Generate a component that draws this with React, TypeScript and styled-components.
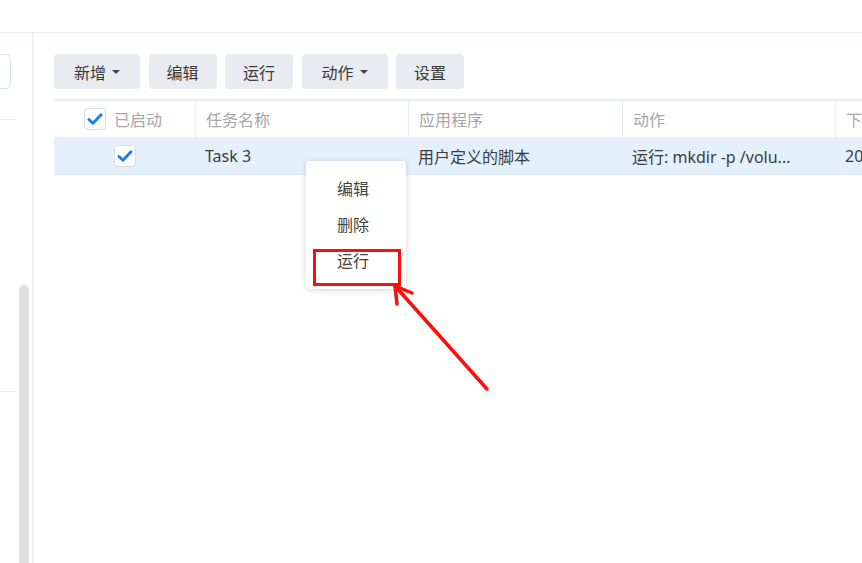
import styled, { createGlobalStyle } from 'styled-components'

const GlobalStyle = createGlobalStyle`
  html, body {
    margin: 0;
    padding: 0;
    background: #fff;
  }
  body {
    font-family: "Noto Sans", "Noto Sans CJK SC", sans-serif;
    color: #333;
  }
`

type Column = { title: string; width: number }

const columns: Column[] = [
  { title: '任务名称', width: 213 },
  { title: '应用程序', width: 214 },
  { title: '动作', width: 213 },
  { title: '下次运行时间', width: 160 },
]

const tasks = [
  {
    id: 3,
    enabled: true,
    name: 'Task 3',
    app: '用户定义的脚本',
    action: '运行: mkdir -p /volu...',
    next: '2023-07-12 00:00',
  },
]

function Check() {
  return (
    <CheckBox>
      <svg width="18" height="18" viewBox="0 0 16 16">
        <path
          d="M2.6 8.4 L6.2 11.8 L13.4 4.2"
          fill="none"
          stroke="#1a7fe4"
          strokeWidth="2.6"
          strokeLinecap="round"
          strokeLinejoin="round"
        />
      </svg>
    </CheckBox>
  )
}

export default function App() {
  return (
    <Page>
      <GlobalStyle />
      <TopBar />
      <Body>
        <Sidebar>
          <SearchBox />
          <Divider />
          <Divider style={{ marginTop: 271 }} />
          <ScrollThumb />
        </Sidebar>
        <Main>
          <Toolbar>
            <Button $width={86}>
              新增 <Caret />
            </Button>
            <Button>编辑</Button>
            <Button>运行</Button>
            <Button $width={86}>
              动作 <Caret />
            </Button>
            <Button>设置</Button>
          </Toolbar>
          <Table>
            <HeaderRow>
              <FirstCell>
                <Check />
                <span>已启动</span>
              </FirstCell>
              {columns.map(col => (
                <HeaderCell key={col.title} $width={col.width}>
                  {col.title}
                </HeaderCell>
              ))}
            </HeaderRow>
            {tasks.map(task => (
              <Row key={task.id} $selected>
                <FirstCell $center>{task.enabled && <Check />}</FirstCell>
                <Cell $width={213}>{task.name}</Cell>
                <Cell $width={214}>{task.app}</Cell>
                <Cell $width={213}>{task.action}</Cell>
                <Cell $width={160}>{task.next}</Cell>
              </Row>
            ))}
          </Table>
        </Main>
      </Body>

      <Menu>
        <MenuItem>编辑</MenuItem>
        <MenuItem>删除</MenuItem>
        <MenuItem>运行</MenuItem>
      </Menu>

      <Annotation width="862" height="563" viewBox="0 0 862 563">
        <rect
          x="314.5"
          y="250.5"
          width="85"
          height="34"
          fill="none"
          stroke="#ff0d0d"
          strokeWidth="3"
        />
        <g
          stroke="#ff0d0d"
          strokeWidth="3.5"
          strokeLinecap="round"
          fill="none"
        >
          <line x1="487" y1="389" x2="395" y2="286" />
          <line x1="395" y1="286" x2="412" y2="293" />
          <line x1="395" y1="286" x2="397" y2="304" />
        </g>
      </Annotation>
    </Page>
  )
}

const Page = styled.div`
  position: relative;
  width: 862px;
  height: 563px;
  overflow: hidden;
  background: #fff;
`

const TopBar = styled.div`
  height: 32px;
  border-bottom: 1px solid #e9eef4;
`

const Body = styled.div`
  display: flex;
  height: 530px;
`

const Sidebar = styled.aside`
  position: relative;
  width: 32px;
  flex-shrink: 0;
  border-right: 2px solid #edf1f6;
  display: flex;
  flex-direction: column;
`

const SearchBox = styled.div`
  margin-top: 21px;
  margin-left: -8px;
  width: 17px;
  height: 33px;
  border: 1px solid #dde3ea;
  border-radius: 5px;
`

const Divider = styled.div`
  margin-top: 30px;
  width: 16px;
  height: 1px;
  background: #e6ebf1;
`

const ScrollThumb = styled.div`
  position: absolute;
  left: 19px;
  top: 252px;
  bottom: 0;
  width: 10px;
  border-radius: 5px 5px 0 0;
  background: #dedede;
`

const Main = styled.main`
  flex: 1;
  padding: 21px 0 0 20px;
  min-width: 0;
`

const Toolbar = styled.div`
  display: flex;
  gap: 8.5px;
`

const Button = styled.button<{ $width?: number }>`
  height: 35px;
  width: ${props => props.$width ?? 68}px;
  padding: 0;
  border: none;
  border-radius: 4px;
  background: #e8ecf1;
  color: #3a3a3a;
  font-family: "Noto Sans", "Noto Sans CJK SC", sans-serif;
  font-size: 16px;
  display: flex;
  align-items: center;
  justify-content: center;
  gap: 6px;
`

const Caret = styled.span`
  display: inline-block;
  width: 0;
  height: 0;
  border-left: 4px solid transparent;
  border-right: 4px solid transparent;
  border-top: 4px solid #444;
`

const Table = styled.div`
  margin-top: 10px;
  border-top: 2px solid #e8edf3;
`

const HeaderRow = styled.div`
  display: flex;
  height: 36px;
  white-space: nowrap;
`

const Row = styled.div<{ $selected?: boolean }>`
  display: flex;
  height: 37px;
  white-space: nowrap;
  background: ${props => (props.$selected ? '#e4f0fc' : '#fff')};
  border-bottom: 1px solid #dde8f3;
`

const FirstCell = styled.div<{ $center?: boolean }>`
  width: 141px;
  flex-shrink: 0;
  display: flex;
  align-items: center;
  justify-content: ${props => (props.$center ? 'center' : 'flex-start')};
  padding-left: ${props => (props.$center ? '0' : '30px')};
  gap: 8px;
  box-sizing: border-box;
  font-size: 16px;
  color: #a6a6a6;
`

const HeaderCell = styled.div<{ $width: number }>`
  width: ${props => props.$width}px;
  flex-shrink: 0;
  box-sizing: border-box;
  border-left: 1px solid #e8edf3;
  padding-left: 10px;
  display: flex;
  align-items: center;
  font-size: 16px;
  color: #a6a6a6;
  overflow: hidden;
`

const Cell = styled.div<{ $width: number }>`
  width: ${props => props.$width}px;
  flex-shrink: 0;
  box-sizing: border-box;
  padding-left: 10px;
  display: flex;
  align-items: center;
  font-size: 16px;
  color: #3c3c3c;
  overflow: hidden;
  text-overflow: ellipsis;
`

const CheckBox = styled.span`
  width: 20px;
  height: 20px;
  border: 1px solid #d6dde6;
  border-radius: 4px;
  background: #fff;
  display: flex;
  align-items: center;
  justify-content: center;
  flex-shrink: 0;
`

const Menu = styled.ul`
  position: absolute;
  left: 306px;
  top: 161px;
  width: 100px;
  margin: 0;
  padding: 10px 0;
  box-sizing: border-box;
  list-style: none;
  background: #fff;
  border-radius: 4px;
  box-shadow: 0 1px 6px rgba(0, 0, 0, 0.16);
`

const MenuItem = styled.li`
  height: 36px;
  line-height: 36px;
  padding-left: 31px;
  font-size: 16px;
  color: #444;
`

const Annotation = styled.svg`
  position: absolute;
  left: 0;
  top: 0;
  pointer-events: none;
`
